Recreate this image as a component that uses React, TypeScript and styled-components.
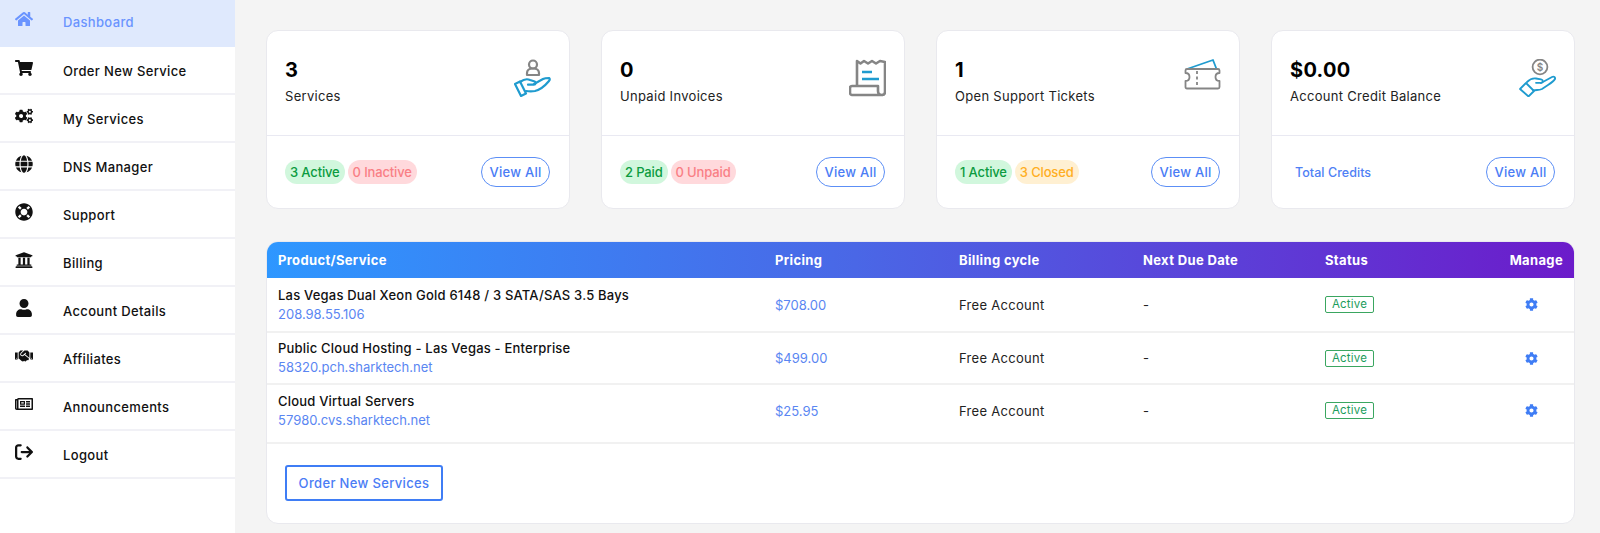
import React from "react";
import styled, { createGlobalStyle } from "styled-components";
import { FaHome, FaShoppingCart, FaCogs, FaGlobe, FaLifeRing, FaUniversity, FaUser, FaHandshake, FaRegNewspaper, FaCog } from "react-icons/fa";
import { FaArrowRightFromBracket } from "react-icons/fa6";

const Global = createGlobalStyle`
  html, body { margin: 0; padding: 0; background: #f4f4f4; }
  body { font-family: Inter, "Liberation Sans", sans-serif; color: #111; }
`;
const Page = styled.div`display: flex; height: 533px; overflow: hidden; background: #f4f4f4;`;
const Sidebar = styled.nav`width: 235px; flex: none; background: #fff; display: flex; flex-direction: column;`;
const NavItem = styled.a<{ $active?: boolean }>`
  display: flex; align-items: flex-start; box-sizing: border-box;
  height: ${p => (p.$active ? "47px" : "48px")};
  padding: ${p => (p.$active ? "13px" : "15px")} 0 0 15px;
  background: ${p => (p.$active ? "#dfe9fd" : "#fff")};
  border-bottom: ${p => (p.$active ? "0" : "2px solid #f1f1f6")};
  color: ${p => (p.$active ? "#6a94ff" : "#111")};
  font-size: 13px; font-weight: 500; letter-spacing: .35px; line-height: 18px;
`;
const NavIcon = styled.span`width: 48px; flex: none; display: flex; font-size: 18px; height: 18px; margin-top: -3px;`;
const Main = styled.main`flex: 1; min-width: 0; padding: 30px 25px 0 31px;`;
const Cards = styled.section`display: grid; grid-template-columns: repeat(4, 304px); column-gap: 31px;`;
const Card = styled.article`background: #fff; border: 1px solid #e9e9ee; border-radius: 12px; height: 179px; box-sizing: border-box; display: flex; flex-direction: column;`;
const CardTop = styled.div`height: 105px; box-sizing: border-box; flex: none; display: flex; justify-content: space-between; padding: 27px 19px 0 18px; border-bottom: 1px solid #e9e9f2;`;
const Value = styled.div`font-size: 20px; font-weight: 700; line-height: 24px; color: #000; letter-spacing: .3px;`;
const Label = styled.div`font-size: 13px; line-height: 18px; margin-top: 5px; color: #222; letter-spacing: .3px;`;
const CardBottom = styled.div`flex: 1; display: flex; align-items: center; justify-content: space-between; padding: 0 19px 0 18px;`;
const Pills = styled.div`display: flex; gap: 3px;`;
const Pill = styled.span<{ $tone: "green" | "red" | "amber" }>`
  height: 24px; line-height: 24px; padding: 0 5px; border-radius: 12px; font-size: 13px; font-weight: 500; letter-spacing: -.15px;
  background: ${p => ({ green: "#d1f7dd", red: "#ffd9dc", amber: "#fff0d2" }[p.$tone])};
  color: ${p => ({ green: "#0b9b40", red: "#f97f85", amber: "#ffae1f" }[p.$tone])};
`;
const CreditsLink = styled.a`color: #4f80f5; font-size: 12.5px; font-weight: 500; margin-left: 5px; letter-spacing: .05px;`;
const ViewAll = styled.a`
  box-sizing: border-box; width: 69px; height: 30px; border: 1px solid #5c8ff6; border-radius: 15px;
  display: flex; align-items: center; justify-content: center; color: #4a7cf5; font-size: 13px; font-weight: 500; letter-spacing: .25px;
`;
const Panel = styled.section`margin-top: 32px; background: #fff; border: 1px solid #e9e9ee; border-radius: 12px; overflow: hidden; height: 283px; box-sizing: border-box;`;
const gridCols = "497px 184px 184px 182px 1fr";
const Head = styled.div`
  display: grid; grid-template-columns: ${gridCols}; align-items: center; height: 37px; padding: 0 12px;
  margin: -1px -1px 0; box-sizing: content-box;
  background: linear-gradient(90deg, #2e97ff 0%, #4a67e6 45%, #6c1bca 100%);
  color: #fff; font-size: 13px; font-weight: 700; letter-spacing: .35px;
`;
const SplitCell = styled.div`display: flex; justify-content: space-between; align-items: center;`;
const Row = styled.div<{ $h: number; $pb?: number }>`
  display: grid; grid-template-columns: ${gridCols}; align-items: center; box-sizing: border-box;
  height: ${p => p.$h}px; padding: 0 11px ${p => p.$pb ?? 0}px; border-bottom: 2px solid #f1f1f1;
  font-size: 13px; letter-spacing: .3px; color: #222;
`;
const Name = styled.div`font-weight: 500; color: #111; line-height: 18px; letter-spacing: .2px;`;
const Sub = styled.a`display: block; color: #5a86f2; line-height: 20px; letter-spacing: 0;`;
const Price = styled.a`color: #5a86f2; letter-spacing: 0;`;
const Status = styled.span`
  display: inline-block; box-sizing: border-box; width: 49px; height: 17px; line-height: 15px; text-align: center;
  border: 1px solid #3aa660; border-radius: 2px; color: #1c9c5c; font-size: 11.5px; letter-spacing: .2px;
`;
const Gear = styled.span`display: flex; justify-content: flex-end; padding-right: 25px; color: #3f7df5; font-size: 13px;`;
const Foot = styled.div`padding: 21px 0 0 18px;`;
const OrderBtn = styled.a`
  display: inline-flex; align-items: center; justify-content: center; box-sizing: border-box; width: 158px; height: 36px;
  border: 2px solid #3f7df5; border-radius: 3px; color: #4a7cf5; font-size: 13px; font-weight: 500; letter-spacing: .35px;
`;
const Art = styled.svg`width: 37px; height: 38px; flex: none; margin: 1px -1px 0 0;`;

const GRAY = "#858585";
const BLUE = "#1f9bcf";

const ServiceIcon = () => (
  <Art viewBox="0 0 37 38" fill="none" strokeWidth={2.2} strokeLinejoin="round" strokeLinecap="round">
    <circle cx="19" cy="5.500" r="4" stroke={GRAY} />
    <path d="M13 16v-2c0-3 2.500-4.500 6-4.500s6 1.500 6 4.500v2z" stroke={GRAY} />
    <path d="M1 25l5-2.500 6 12-5 2.500z" stroke={BLUE} />
    <path d="M6 23c4-3 7-3.500 10-2l4 1.200c2.500.8 2 3.500-.5 3.500H14" stroke={BLUE} />
    <path d="M20 25l9-5c2-1 3-1 6-1 1 .6 1 1.500 0 3-5 6-10 9-14 10-4 .8-6 .5-9 0" stroke={BLUE} />
  </Art>
);
const InvoiceIcon = () => (
  <Art viewBox="0 0 37 38" fill="none" strokeWidth={2.6} strokeLinejoin="round">
    <path d="M8 26V2l3.500 2.500L15 2l4 2.500L23 2l4 2.500L31 2l5 1v30c0 2-1 3-3 3" stroke={GRAY} />
    <path d="M3 36h30c-3 0-4-2-4-4v-5H3c-1.500 0-2 1-2 2v5c0 1 1 2 2 2z" stroke={GRAY} />
    <path d="M13 13h10M13 20h17" stroke={BLUE} />
  </Art>
);
const TicketIcon = () => (
  <Art viewBox="0 0 37 38" fill="none" strokeWidth={1.8} strokeLinejoin="round">
    <path d="M3 10L29 1l3.500 9" stroke={BLUE} />
    <path d="M3 10h31c1 0 1.500.6 1.500 1.500V14c-3 0-4 1.500-4 4s1 4 4 4v6c0 1-.5 1.500-1.500 1.500H3c-1 0-1.500-.5-1.500-1.500v-6c3 0 4-1.500 4-4s-1-4-4-4v-2.500C1.500 10.600 2 10 3 10z" stroke={GRAY} />
    <path d="M13 12v16" stroke={GRAY} strokeDasharray="3 2.500" />
  </Art>
);
const CreditIcon = () => (
  <Art viewBox="0 0 37 38" fill="none" strokeWidth={1.8} strokeLinejoin="round" strokeLinecap="round">
    <circle cx="21" cy="8" r="7.400" stroke={GRAY} />
    <text x="21" y="11.500" textAnchor="middle" fontSize="10" fontWeight="600" fill={GRAY} stroke="none" fontFamily="Inter, sans-serif">$</text>
    <path d="M1 30l6-6 8 8-5.500 5.500z" stroke={BLUE} />
    <path d="M8 23c3-3 5-4 9-3.500l5 .8c2.500.5 2.500 3.200 0 3.500h-5" stroke={BLUE} />
    <path d="M22 24l11-6c2-1 3.500.5 3 2-1 2-4 4-7 6l-6 4c-2 1-3 1-5 1l-4 .5" stroke={BLUE} />
  </Art>
);

const nav = [
  [FaHome, "Dashboard"], [FaShoppingCart, "Order New Service"], [FaCogs, "My Services"], [FaGlobe, "DNS Manager"], [FaLifeRing, "Support"],
  [FaUniversity, "Billing"], [FaUser, "Account Details"], [FaHandshake, "Affiliates"], [FaRegNewspaper, "Announcements"], [FaArrowRightFromBracket, "Logout"],
] as const;

type Tone = "green" | "red" | "amber";
const cards: { value: string; label: string; Icon: React.FC; pills?: [string, Tone][] }[] = [
  { value: "3", label: "Services", Icon: ServiceIcon, pills: [["3 Active", "green"], ["0 Inactive", "red"]] },
  { value: "0", label: "Unpaid Invoices", Icon: InvoiceIcon, pills: [["2 Paid", "green"], ["0 Unpaid", "red"]] },
  { value: "1", label: "Open Support Tickets", Icon: TicketIcon, pills: [["1 Active", "green"], ["3 Closed", "amber"]] },
  { value: "$0.00", label: "Account Credit Balance", Icon: CreditIcon },
];
const rows = [
  { name: "Las Vegas Dual Xeon Gold 6148 / 3 SATA/SAS 3.5 Bays", sub: "208.98.55.106", price: "$708.00", h: 55 },
  { name: "Public Cloud Hosting - Las Vegas - Enterprise", sub: "58320.pch.sharktech.net", price: "$499.00", h: 52 },
  { name: "Cloud Virtual Servers", sub: "57980.cvs.sharktech.net", price: "$25.95", h: 59, pb: 6 },
];

export default function App() {
  return (
    <Page>
      <Global />
      <Sidebar>
        {nav.map(([Icon, label], i) => (
          <NavItem key={label} $active={i === 0}>
            <NavIcon><Icon /></NavIcon>
            {label}
          </NavItem>
        ))}
      </Sidebar>
      <Main>
        <Cards>
          {cards.map(({ value, label, Icon, pills }) => (
            <Card key={label}>
              <CardTop>
                <div>
                  <Value>{value}</Value>
                  <Label>{label}</Label>
                </div>
                <Icon />
              </CardTop>
              <CardBottom>
                {pills ? (
                  <Pills>{pills.map(([t, tone]) => <Pill key={t} $tone={tone}>{t}</Pill>)}</Pills>
                ) : (
                  <CreditsLink>Total Credits</CreditsLink>
                )}
                <ViewAll>View All</ViewAll>
              </CardBottom>
            </Card>
          ))}
        </Cards>
        <Panel>
          <Head>
            <span>Product/Service</span><span>Pricing</span><span>Billing cycle</span><span>Next Due Date</span>
            <SplitCell><span>Status</span><span>Manage</span></SplitCell>
          </Head>
          {rows.map(r => (
            <Row key={r.sub} $h={r.h} $pb={r.pb}>
              <div><Name>{r.name}</Name><Sub>{r.sub}</Sub></div>
              <Price>{r.price}</Price>
              <span>Free Account</span>
              <span>-</span>
              <SplitCell>
                <Status>Active</Status>
                <Gear><FaCog /></Gear>
              </SplitCell>
            </Row>
          ))}
          <Foot><OrderBtn>Order New Services</OrderBtn></Foot>
        </Panel>
      </Main>
    </Page>
  );
}
